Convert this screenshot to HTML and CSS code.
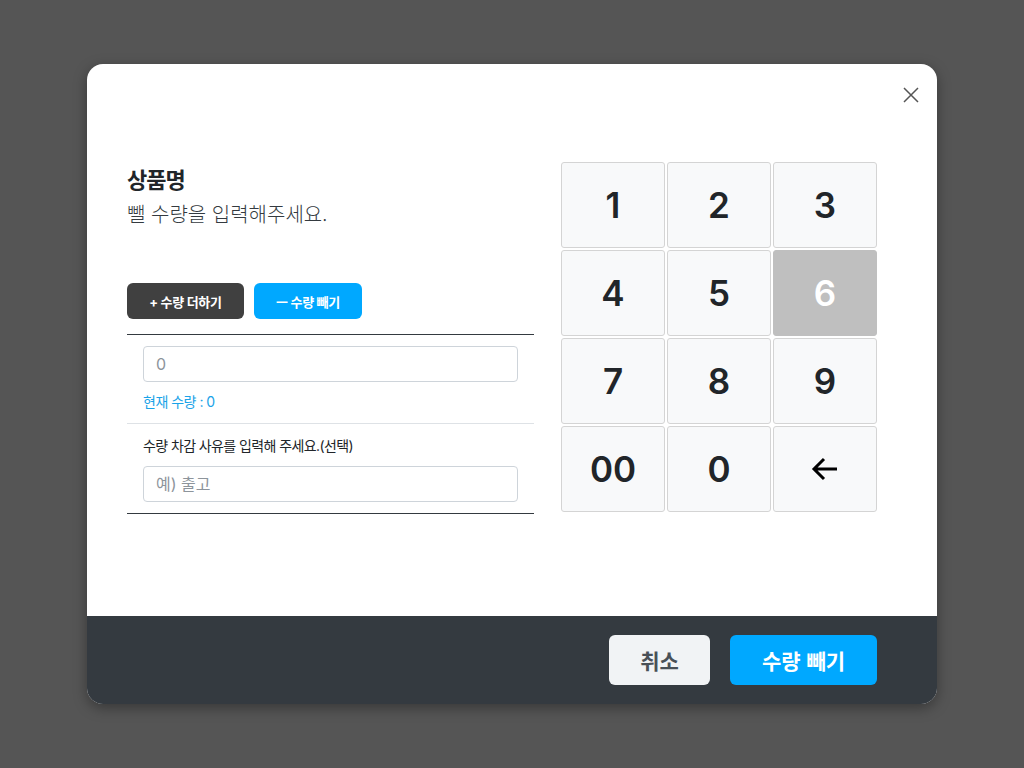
FILE: index.html
```html
<!DOCTYPE html>
<html lang="ko">
<head>
<meta charset="utf-8">
<title>수량 빼기</title>
<link rel="stylesheet" href="styles.css">
</head>
<body>
<div class="modal">
  <button class="close" aria-label="닫기">
    <svg width="16" height="16" viewBox="0 0 16 16"><path d="M1 1L15 15M15 1L1 15" stroke="#555" stroke-width="1.5" fill="none"/></svg>
  </button>
  <div class="modal-body">
    <div class="left">
      <h2 class="title">상품명</h2>
      <p class="subtitle">뺄 수량을 입력해주세요.</p>
      <div class="mode">
        <button class="mode-btn dark">+ 수량 더하기</button>
        <button class="mode-btn blue">ㅡ 수량 빼기</button>
      </div>
      <div class="form">
        <div class="block first">
          <input class="field" type="text" placeholder="0">
          <div class="current">현재 수량 : 0</div>
        </div>
        <div class="block second">
          <div class="label">수량 차감 사유를 입력해 주세요.(선택)</div>
          <input class="field" type="text" placeholder="예) 출고">
        </div>
      </div>
    </div>
    <div class="keypad">
      <button class="key">1</button>
      <button class="key">2</button>
      <button class="key">3</button>
      <button class="key">4</button>
      <button class="key">5</button>
      <button class="key active">6</button>
      <button class="key">7</button>
      <button class="key">8</button>
      <button class="key">9</button>
      <button class="key">00</button>
      <button class="key">0</button>
      <button class="key" aria-label="지우기">
        <svg width="28" height="24" viewBox="0 0 28 24"><path d="M26 12H3M13 2L3 12L13 22" stroke="#000" stroke-width="3" fill="none"/></svg>
      </button>
    </div>
  </div>
  <div class="modal-footer">
    <button class="foot-btn cancel">취소</button>
    <button class="foot-btn confirm">수량 빼기</button>
  </div>
</div>
</body>
</html>
```

FILE: styles.css
```css
* { box-sizing: border-box; }
html, body { margin: 0; padding: 0; }
body {
  background: #555555;
  height: 100vh;
  display: flex;
  align-items: center;
  justify-content: center;
  font-family: "Inter", "Noto Sans CJK KR", sans-serif;
  color: #212529;
}
button { font-family: inherit; cursor: pointer; }
.modal {
  position: relative;
  width: 850px;
  height: 640px;
  background: #fff;
  border-radius: 16px;
  overflow: hidden;
  display: flex;
  flex-direction: column;
  box-shadow: 0 4px 14px rgba(0,0,0,0.35);
}
.close {
  position: absolute;
  top: 23px;
  right: 18px;
  width: 16px;
  height: 16px;
  padding: 0;
  border: 0;
  background: none;
  display: flex;
}
.modal-body {
  flex: 1;
  display: flex;
  padding: 98px 60px 0 40px;
  gap: 27px;
}
.left {
  width: 407px;
  padding-top: 2px;
}
.title {
  margin: 0;
  font-family: "Noto Sans CJK KR", sans-serif;
  font-size: 22px;
  font-weight: 700;
  line-height: 28px;
  letter-spacing: -1px;
  color: #212529;
}
.subtitle {
  margin: 8px 0 0;
  font-family: "Noto Sans CJK KR", sans-serif;
  font-size: 20px;
  font-weight: 300;
  line-height: 28px;
  letter-spacing: 0;
  color: #343a40;
}
.mode {
  display: flex;
  gap: 10px;
  margin-top: 55px;
}
.mode-btn {
  height: 36px;
  border: 0;
  border-radius: 6px;
  color: #fff;
  font-size: 13px;
  font-weight: 700;
  letter-spacing: -0.3px;
  padding: 0;
}
.mode-btn.dark { background: #404040; width: 117px; }
.mode-btn.blue { background: #00a8ff; width: 108px; }
.form {
  margin-top: 15px;
  border-top: 1px solid #343a40;
  border-bottom: 1px solid #343a40;
}
.block { padding: 0 16px; }
.block.first {
  padding-top: 11px;
  padding-bottom: 11px;
  border-bottom: 1px solid #dee2e6;
}
.block.second {
  padding-top: 12px;
  padding-bottom: 11px;
}
.field {
  display: block;
  width: 100%;
  height: 36px;
  border: 1px solid #ced4da;
  border-radius: 4px;
  padding: 0 12px;
  font-family: inherit;
  font-size: 16px;
  color: #212529;
  outline: none;
}
.field::placeholder { color: #8d949b; }
.current {
  margin-top: 10px;
  font-size: 14px;
  line-height: 20px;
  color: #1aa3e8;
  letter-spacing: -0.5px;
}
.label {
  font-size: 14px;
  line-height: 20px;
  color: #212529;
  letter-spacing: -0.6px;
  margin-bottom: 10px;
}
.keypad {
  display: grid;
  grid-template-columns: repeat(3, 104px);
  grid-template-rows: repeat(4, 86px);
  gap: 2px;
  align-content: start;
}
.key {
  border: 1px solid #d4d4d4;
  border-radius: 3px;
  background: #f8f9fa;
  color: #212529;
  font-size: 35px;
  font-weight: 600;
  display: flex;
  align-items: center;
  justify-content: center;
  padding: 0;
}
.key.active {
  background: #bfbfbf;
  border-color: #bfbfbf;
  color: #fff;
}
.modal-footer {
  height: 88px;
  background: #343a40;
  display: flex;
  align-items: center;
  justify-content: flex-end;
  gap: 20px;
  padding-right: 60px;
}
.foot-btn {
  height: 50px;
  border: 0;
  border-radius: 6px;
  font-family: "Noto Sans CJK KR", sans-serif;
  font-size: 21px;
  font-weight: 700;
  letter-spacing: 0;
  padding: 0;
}
.foot-btn.cancel { width: 101px; background: #f1f3f5; color: #495057; }
.foot-btn.confirm { width: 147px; background: #00a8ff; color: #fff; }
```
